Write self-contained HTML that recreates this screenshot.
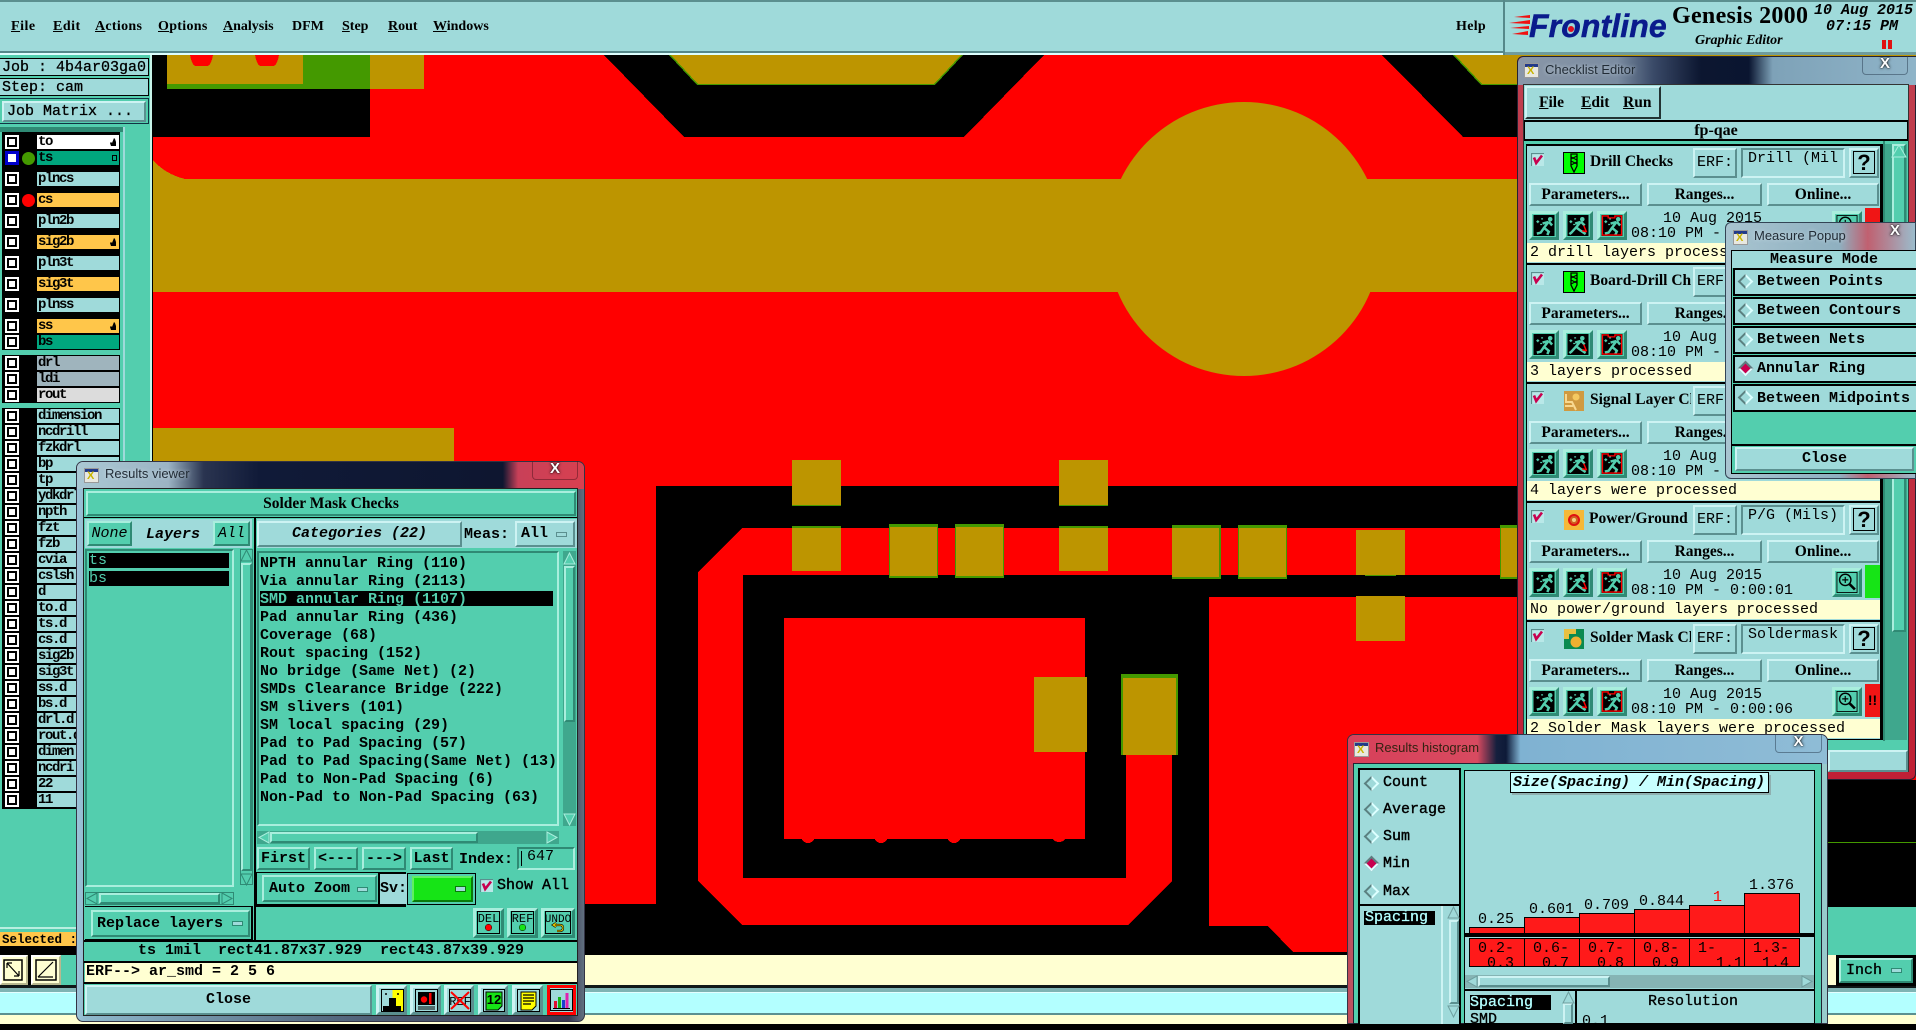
<!DOCTYPE html>
<html><head><meta charset="utf-8"><title>Genesis 2000</title>
<style>
*{box-sizing:border-box}
html,body{margin:0;padding:0;width:1916px;height:1024px;overflow:hidden;background:#000}
div,span,svg.p{position:absolute}
body{font-family:"Liberation Mono",monospace;color:#000}
.t{white-space:pre;line-height:16px;height:16px}
.m{font:15px/16px "Liberation Mono",monospace}
.mb{font:bold 15px/16px "Liberation Mono",monospace}
.mi{font:italic bold 15px/16px "Liberation Mono",monospace}
.s{font:bold 14px/16px "Liberation Serif",serif}
.s15{font:bold 15.5px/18px "Liberation Serif",serif}
.b{background:#9fdada;border:2px solid;border-color:#cdf3f3 #5b8f8f #5b8f8f #cdf3f3;display:flex;align-items:center;justify-content:center;white-space:pre}
.g{background:#53ceae;border:2px solid;border-color:#a9eedd #2f8a74 #2f8a74 #a9eedd;display:flex;align-items:center;justify-content:center;white-space:pre}
.pan{background:#9fdada}
.teal{background:#53ceae}
.r{position:absolute;left:0;width:120px;height:14px}
.r i{position:absolute;left:5px;top:0;width:14px;height:14px;background:#fff;border:2px solid #fff;box-shadow:inset 0 0 0 2px #000}
.r b{position:absolute;left:37px;top:0;width:82px;height:14px;background:#9fdada;font:bold 14px/14px "Liberation Mono",monospace;letter-spacing:-1.4px;padding-left:1px;overflow:hidden;white-space:pre}
.r u{position:absolute;left:22px;top:1px;width:13px;height:13px;border-radius:50%}
.ttl{font:13px/16px "Liberation Sans",sans-serif;color:#222c36;white-space:pre;text-shadow:0 0 4px rgba(225,238,245,.7);height:16px}
.wi{background:#e8e8e0;border:1px solid #999}
.wi:before{content:"";position:absolute;left:0;top:0;right:0;height:3px;background:#223a8a}
.wi:after{content:"X";position:absolute;left:2px;top:2px;font:bold 11px/11px "Liberation Sans",sans-serif;color:#c8b400}
.cl{font:bold 15px/15px "Liberation Sans",sans-serif;color:#fff;text-shadow:0 0 3px #000,0 0 1px #000;text-align:center}
.sec{left:1527px;width:353px;height:117px;background:#9fdada}
.sec .msg{left:0;top:97px;width:353px;height:19px;background:#ffffd2;padding-left:3px;white-space:pre;overflow:hidden;font:15px/20px "Liberation Mono",monospace}
.ib{background:#53ceae;border:3px solid;border-color:#a9eedd #2f8a74 #2f8a74 #a9eedd}
.ib svg{position:absolute;left:1px;top:1px;width:22px;height:21px}
.d{width:11px;height:11px;transform:rotate(45deg);border:2px solid;border-color:#dff #dff #5b8080 #5b8080;background:#9fdada}
.d.on{background:#c8004f;border-color:#5b8080 #dff #dff #5b8080}
.sel{background:#000;color:#53ceae}
.tr{background:#3fa78d}
.q{left:2px;top:1px;width:22px;height:23px;border:1.5px solid #000;font:bold 22px/21px "Liberation Sans",sans-serif;text-align:center}
.inp{left:214px;top:2px;width:104px;height:30px;justify-content:flex-start;align-items:flex-start;padding:1px 5px;border-color:#5b8f8f #cdf3f3 #cdf3f3 #5b8f8f;overflow:hidden}
.bb{background:#9fdada;border:3px solid;border-color:#cdf3f3 #5b8f8f #5b8f8f #cdf3f3}
.gb{background:#53ceae;border:3px solid;border-color:#a9eedd #2f8a74 #2f8a74 #a9eedd}
svg{display:block}
</style></head><body>
<svg width="0" height="0" style="position:absolute"><defs>
<symbol id="run" viewBox="0 0 22 22"><rect width="22" height="22"/><circle cx="17.5" cy="4.5" r="2.4" fill="#53ceae"/><path d="M16 7L11 13.5 16 17.5 14.5 21M11 13.5L7.5 18.5 3.5 19.5M16 7L19.5 11M15 7.5L9.5 9" stroke="#53ceae" stroke-width="2.6" fill="none"/><path d="M3 7h3M4.5 5.5v3M7 10h2M8 4h2" stroke="#53ceae" stroke-width="1.3"/></symbol>
<symbol id="run2" viewBox="0 0 22 22"><rect width="22" height="22"/><circle cx="15.5" cy="4.5" r="2.4" fill="#53ceae"/><path d="M14 7L9 13 13 16 19 20M9 13L4 18.5 2 20M14 7L18 11M13 7.5L8 9" stroke="#53ceae" stroke-width="2.6" fill="none"/><path d="M2 7h3M3.5 5.5v3M6 10h2M7 4h2" stroke="#53ceae" stroke-width="1.3"/><path d="M17 11l3 7M15.5 16.5l4 1" stroke="#f00" stroke-width="1.5"/></symbol>
<symbol id="run3" viewBox="0 0 22 22"><use href="#run"/><path d="M1 1h6v2h7V1h7v20H1z" stroke="#f00" stroke-width="1.4" fill="none"/></symbol>
<symbol id="chk" viewBox="0 0 13 13"><rect width="13" height="13" fill="#b9e8e8"/><path d="M0 .5h13M.5 0v13" stroke="#5b8f8f" stroke-width="1.2"/><path d="M3 4.5L5.2 10 11 2.5" fill="none" stroke="#c8004f" stroke-width="2.6"/></symbol>
<symbol id="zm" viewBox="0 0 24 24"><rect width="24" height="24" fill="#53ceae" stroke="#000" stroke-width="2"/><circle cx="10" cy="9" r="6.5" fill="none" stroke="#000" stroke-width="1.6"/><path d="M10 5.5v7M6.5 9h7" stroke="#000" stroke-width="1.3"/><path d="M15 14l6 6" stroke="#000" stroke-width="3"/></symbol>
<symbol id="dr" viewBox="0 0 22 22"><rect x=".5" y=".5" width="21" height="21" fill="#0f0" stroke="#000"/><path d="M8 2h6v12l-3 6-3-6z" fill="none" stroke="#000" stroke-width="1.3"/><path d="M8 5l6 3M8 9l6 3M8 13l6-3M8 7l6-3" stroke="#000" stroke-width="1"/></symbol>
<symbol id="hand" viewBox="0 0 8 9"><path d="M1 5l1-1 1 1 2-5 1 1 1 3v4H2z"/></symbol>
</defs></svg>

<!-- CANVAS -->
<svg class="p" style="left:0;top:0" width="1916" height="1024" shape-rendering="crispEdges">
<rect x="153" y="55" width="1763" height="900" fill="#f00"/>
<rect x="153" y="55" width="217" height="82" fill="#000"/>
<rect x="167" y="55" width="203" height="34" fill="#449900"/>
<rect x="167" y="55" width="136" height="29" fill="#bd9500"/>
<rect x="370" y="55" width="54" height="34" fill="#bd9500"/>
<path d="M190 55h23q-2 11-6 11h-11q-4 0-6-11zM255 55h24q-2 11-6 11h-12q-4 0-6-11z" fill="#f00"/>
<path d="M604 55L684 137H964L1044 55z" fill="#000"/>
<path d="M669 55L697 85H935L963 55z" fill="#449900"/>
<path d="M671 55L698 84H934L961 55z" fill="#bd9500"/>
<path d="M1382 55L1463 137H1916V55z" fill="#000"/>
<path d="M1453 55L1481 85H1916V55z" fill="#449900"/>
<path d="M1455 55L1482 84H1916V55z" fill="#bd9500"/>
<circle cx="1244" cy="239" r="137" fill="#bd9500" shape-rendering="auto"/>
<path d="M153 160Q165 174 185 179H1916V292H153z" fill="#bd9500"/>
<rect x="153" y="428" width="301" height="40" fill="#bd9500"/>
<path d="M656 486H1916V955H153V904H656z" fill="#000"/>
<path d="M742 528H1916V575H743V878H1126V755H1172V881L1128 925H742L698 881V572z" fill="#f00"/>
<path d="M784 618H1085V839H784z" fill="#f00"/>
<circle cx="808" cy="836" r="7" fill="#f00"/><circle cx="881" cy="836" r="7" fill="#f00"/><circle cx="954" cy="836" r="7" fill="#f00"/><circle cx="1059" cy="834" r="8" fill="#f00"/>
<path d="M1209 597H1916V952H1293L1268 926H1209z" fill="#f00"/>
<g fill="#449900">
<rect x="792" y="526" width="49" height="45"/><rect x="1059" y="526" width="49" height="45"/>
<rect x="889" y="524" width="49" height="54"/><rect x="955" y="524" width="49" height="54"/>
<rect x="1172" y="525" width="49" height="54"/><rect x="1238" y="525" width="49" height="54"/>
<rect x="1500" y="525" width="17" height="54"/><rect x="1121" y="674" width="57" height="81"/>
<rect x="1365" y="573" width="31" height="3"/><rect x="792" y="460" width="49" height="46"/><rect x="1059" y="460" width="49" height="46"/>
</g>
<g fill="#bd9500">
<rect x="792" y="460" width="49" height="45"/><rect x="1059" y="460" width="49" height="45"/>
<rect x="792" y="528" width="49" height="43"/><rect x="1059" y="528" width="49" height="43"/>
<rect x="890" y="527" width="47" height="49"/><rect x="956" y="527" width="47" height="49"/>
<rect x="1172" y="528" width="47" height="49"/><rect x="1239" y="528" width="47" height="49"/>
<rect x="1356" y="530" width="49" height="45"/><rect x="1356" y="596" width="49" height="45"/>
<rect x="1501" y="528" width="16" height="49"/>
<rect x="1034" y="677" width="53" height="75"/><rect x="1123" y="678" width="53" height="77"/>
</g>
<rect x="1828" y="780" width="88" height="127" fill="#000"/>
<rect x="1828" y="842" width="88" height="1" fill="#449900"/>
<rect x="1828" y="907" width="88" height="48" fill="#53ceae"/>
</svg>
<div style="left:152px;top:55px;width:1px;height:900px;background:#000"></div>

<!-- TOP BAR -->
<div class="pan" style="left:0;top:0;width:1916px;height:52px;border-top:2px solid #5b8f8f"></div>
<div style="left:0;top:51px;width:1503px;height:2px;background:#55888a"></div>
<div style="left:0;top:53px;width:1503px;height:2px;background:#dff"></div>
<div class="t s" style="left:11px;top:19px;letter-spacing:.5px"><u>F</u>ile</div>
<div class="t s" style="left:53px;top:19px;letter-spacing:.5px"><u>E</u>dit</div>
<div class="t s" style="left:95px;top:19px;letter-spacing:.3px"><u>A</u>ctions</div>
<div class="t s" style="left:158px;top:19px;letter-spacing:.3px"><u>O</u>ptions</div>
<div class="t s" style="left:223px;top:19px"><u>A</u>nalysis</div>
<div class="t s" style="left:292px;top:19px">DFM</div>
<div class="t s" style="left:342px;top:19px"><u>S</u>tep</div>
<div class="t s" style="left:388px;top:19px"><u>R</u>out</div>
<div class="t s" style="left:433px;top:19px"><u>W</u>indows</div>
<div class="t s" style="left:1456px;top:19px;letter-spacing:.3px">Help</div>
<!-- logo -->
<div style="left:1503px;top:0;width:2px;height:55px;background:#55888a"></div>
<div style="left:1505px;top:52px;width:411px;height:3px;background:#6f9c9c"></div>
<svg class="p" style="left:1508px;top:14px" width="24" height="24"><path d="M22 1L6 3 22 4zM22 6L1 9 22 10zM21 12L2 14 21 15zM20 17L4 20 20 21z" fill="#f01010"/></svg>
<div class="t" style="left:1529px;top:8px;height:36px;font:italic bold 32px/36px 'Liberation Sans',sans-serif;color:#0a1b8c;letter-spacing:.1px;-webkit-text-stroke:.5px #0a1b8c">Frontline</div>
<div style="left:1568px;top:26px;width:6px;height:6px;border-radius:50%;background:#e01020"></div>
<div class="t" style="left:1672px;top:2px;height:28px;font:bold 24px/28px 'Liberation Serif',serif;letter-spacing:.3px">Genesis 2000</div>
<div class="t" style="left:1695px;top:33px;font:italic bold 14px/16px 'Liberation Serif',serif">Graphic Editor</div>
<div class="t mi" style="left:1814px;top:3px">10 Aug 2015</div>
<div class="t mi" style="left:1826px;top:19px">07:15 PM</div>
<div style="left:1882px;top:40px;width:4px;height:9px;background:#e01010"></div>
<div style="left:1888px;top:40px;width:4px;height:9px;background:#e01010"></div>

<!-- LEFT PANEL -->
<div class="teal" style="left:0;top:55px;width:152px;height:877px"></div>
<div style="left:150px;top:55px;width:2px;height:900px;background:#c8f5ea"></div>
<div class="pan" style="left:0;top:58px;width:149px;height:18px;border:1px solid #000;border-left:0"></div>
<div class="t mb" style="left:2px;top:60px;font-weight:normal;-webkit-text-stroke:.3px #000">Job : 4b4ar03ga0</div>
<div class="pan" style="left:0;top:78px;width:149px;height:18px;border:1px solid #000;border-left:0"></div>
<div class="t mb" style="left:2px;top:80px;font-weight:normal;-webkit-text-stroke:.3px #000">Step: cam</div>
<div class="teal" style="left:0;top:98px;width:149px;height:26px;border:1px solid #134;border-left:0"></div>
<div class="b" style="left:2px;top:101px;width:144px;height:21px;justify-content:flex-start;padding-left:3px;font:15px/16px 'Liberation Mono',monospace;-webkit-text-stroke:.3px #000">Job Matrix ...</div>
<div style="left:0;top:127px;width:124px;height:5px;background:#2f8a74"></div>
<div style="left:123px;top:127px;width:2px;height:805px;background:#9fdada"></div>
<div style="left:2px;top:132px;width:118px;height:218px;background:#000"></div>
<div style="left:2px;top:355px;width:118px;height:48px;background:#000"></div>
<div style="left:2px;top:408px;width:118px;height:401px;background:#000"></div>

<div class="r" style="top:135px"><i></i><b style="background:#fff">to</b></div>
<div class="r" style="top:151px"><i style="border:3px solid #00c;box-shadow:none"></i><u style="background:#449900"></u><b style="background:#00a67e">ts</b></div>
<div class="r" style="top:172px"><i></i><b>plncs</b></div>
<div class="r" style="top:193px"><i></i><u style="background:#f00"></u><b style="background:#ffc64a">cs</b></div>
<div class="r" style="top:214px"><i></i><b>pln2b</b></div>
<div class="r" style="top:235px"><i></i><b style="background:#ffc64a">sig2b</b></div>
<div class="r" style="top:256px"><i></i><b>pln3t</b></div>
<div class="r" style="top:277px"><i></i><b style="background:#ffc64a">sig3t</b></div>
<div class="r" style="top:298px"><i></i><b>plnss</b></div>
<div class="r" style="top:319px"><i></i><b style="background:#ffc64a">ss</b></div>
<div class="r" style="top:335px"><i></i><b style="background:#00a67e">bs</b></div>
<div class="r" style="top:356px"><i></i><b style="background:#9fb4bd">drl</b></div>
<div class="r" style="top:372px"><i></i><b style="background:#9fb4bd">ldi</b></div>
<div class="r" style="top:388px"><i></i><b style="background:#dcdcdc">rout</b></div>
<div class="r" style="top:409px"><i></i><b>dimension</b></div>
<div class="r" style="top:425px"><i></i><b>ncdrill</b></div>
<div class="r" style="top:441px"><i></i><b>fzkdrl</b></div>
<div class="r" style="top:457px"><i></i><b>bp</b></div>
<div class="r" style="top:473px"><i></i><b>tp</b></div>
<div class="r" style="top:489px"><i></i><b>ydkdrl</b></div>
<div class="r" style="top:505px"><i></i><b>npth</b></div>
<div class="r" style="top:521px"><i></i><b>fzt</b></div>
<div class="r" style="top:537px"><i></i><b>fzb</b></div>
<div class="r" style="top:553px"><i></i><b>cvia</b></div>
<div class="r" style="top:569px"><i></i><b>cslsh</b></div>
<div class="r" style="top:585px"><i></i><b>d</b></div>
<div class="r" style="top:601px"><i></i><b>to.d</b></div>
<div class="r" style="top:617px"><i></i><b>ts.d</b></div>
<div class="r" style="top:633px"><i></i><b>cs.d</b></div>
<div class="r" style="top:649px"><i></i><b>sig2b</b></div>
<div class="r" style="top:665px"><i></i><b>sig3t</b></div>
<div class="r" style="top:681px"><i></i><b>ss.d</b></div>
<div class="r" style="top:697px"><i></i><b>bs.d</b></div>
<div class="r" style="top:713px"><i></i><b>drl.d</b></div>
<div class="r" style="top:729px"><i></i><b>rout.d</b></div>
<div class="r" style="top:745px"><i></i><b>dimen</b></div>
<div class="r" style="top:761px"><i></i><b>ncdri</b></div>
<div class="r" style="top:777px"><i></i><b>22</b></div>
<div class="r" style="top:793px"><i></i><b>11</b></div>
<svg class="p" style="left:109px;top:138px" width="8" height="9"><use href="#hand"/></svg>
<svg class="p" style="left:109px;top:238px" width="8" height="9"><use href="#hand"/></svg>
<svg class="p" style="left:109px;top:322px" width="8" height="9"><use href="#hand"/></svg>
<div style="left:112px;top:155px;width:5px;height:6px;border:1px solid #000"></div>

<!-- BOTTOM -->
<div class="teal" style="left:0;top:928px;width:152px;height:27px"></div>
<div style="left:0;top:927px;width:150px;height:2px;background:#b8efe0"></div>
<div style="left:0;top:932px;width:80px;height:14px;background:#ffc64a"></div>
<div class="t" style="left:2px;top:933px;font:bold 12.5px/15px 'Liberation Mono',monospace;height:15px">Selected :</div>
<div style="left:0;top:946px;width:152px;height:9px;background:#000"></div>
<div style="left:0;top:955px;width:1916px;height:31px;background:#ffffd2"></div>
<div style="left:0;top:954px;width:62px;height:32px;background:#000"></div>
<div style="left:0;top:955px;width:28px;height:30px;background:#ffffd2;border:2px solid;border-color:#fff #b8b890 #b8b890 #fff"></div>
<div style="left:31px;top:955px;width:30px;height:30px;background:#ffffd2;border:2px solid;border-color:#fff #b8b890 #b8b890 #fff"></div>
<svg class="p" style="left:3px;top:959px" width="20" height="22"><rect x="1" y="1" width="18" height="20" fill="none" stroke="#000" stroke-width="1.5"/><path d="M4 4l12 13M4 4h5M4 4v5M16 17h-5M16 17v-5" stroke="#000" stroke-width="1.2" fill="none"/></svg>
<svg class="p" style="left:35px;top:959px" width="22" height="22"><rect x="1" y="1" width="20" height="20" fill="none" stroke="#000" stroke-width="1.5"/><path d="M3 18L18 3M3 18h15" stroke="#000" stroke-width="1.2" fill="none"/></svg>
<div class="teal" style="left:61px;top:955px;width:15px;height:30px"></div>
<div style="left:0;top:985px;width:1916px;height:3px;background:#101818"></div>
<div style="left:0;top:988px;width:1916px;height:4px;background:#7fb4b4"></div>
<div style="left:0;top:992px;width:1916px;height:21px;background:#b3ffff;border-top:1px solid #e4ffff"></div>
<div style="left:0;top:1013px;width:1916px;height:2px;background:#5b9090"></div>
<div style="left:0;top:1015px;width:1916px;height:9px;background:#ffffd2"></div>
<div style="left:1836px;top:955px;width:80px;height:31px;background:#000"></div>
<div class="g" style="left:1839px;top:958px;width:74px;height:25px;justify-content:flex-start;padding-left:5px;font:15px/16px 'Liberation Mono',monospace;-webkit-text-stroke:.3px #000">Inch<span style="left:50px;top:8px;width:11px;height:5px;background:#9fdada;border:1px solid #2f8a74"></span></div>

<!-- CHECKLIST -->
<div style="left:1517px;top:56px;width:399px;height:724px;border-radius:6px 0 6px 6px;border:1px solid #223;background:linear-gradient(#c04050,#c02035)"></div>
<div style="left:1518px;top:57px;width:398px;height:28px;border-radius:6px 0 0 0;background:linear-gradient(90deg,#8a97a8 0,#7a8ca0 25%,#3a4a68 34%,#0c1630 46%,#0a1530 58%,#7ea2b8 64%,#8fb4c8 100%)"></div>
<div class="wi" style="left:1524px;top:63px;width:15px;height:15px"></div>
<div class="ttl" style="left:1545px;top:62px">Checklist Editor</div>
<div class="cl" style="left:1862px;top:56px;width:46px;height:19px;border:1px solid rgba(40,60,80,.5);border-top:0;border-radius:0 0 4px 4px">X</div>
<div style="left:1523px;top:84px;width:386px;height:688px;background:#53ceae;border:1px solid #333"></div>
<div class="pan" style="left:1524px;top:85px;width:384px;height:35px"></div>
<div class="b" style="left:1525px;top:86px;width:136px;height:33px;border-color:#cdf3f3 #233 #233 #cdf3f3"></div>
<div class="t s15" style="left:1539px;top:94px"><u>F</u>ile</div>
<div class="t s15" style="left:1581px;top:94px"><u>E</u>dit</div>
<div class="t s15" style="left:1623px;top:94px"><u>R</u>un</div>
<div class="pan" style="left:1524px;top:120px;width:384px;height:21px;border:1px solid #000;border-width:2px 1px;text-align:center;font:bold 16px/17px 'Liberation Serif',serif">fp-qae</div>
<div style="left:1526px;top:144px;width:357px;height:596px;background:#000"></div>
<div class="tr" style="left:1885px;top:144px;width:22px;height:596px"></div>
<div style="left:1883px;top:141px;width:2px;height:600px;background:#2f8a74"></div>
<div class="g" style="left:1892px;top:144px;width:14px;height:488px"></div>
<svg class="p" style="left:1891px;top:144px" width="16" height="14"><path d="M8 1L15 13H1z" fill="#53ceae" stroke="#a9eedd"/></svg>

<!-- section 1 -->
<div class="sec" style="top:146px">
<svg class="p" style="left:4px;top:7px" width="13" height="13"><use href="#chk"/></svg>
<svg class="p" style="left:36px;top:6px" width="22" height="22"><use href="#dr"/></svg>
<div class="t s15" style="left:63px;top:7px;width:101px;height:18px;overflow:hidden">Drill Checks</div>
<div class="b m" style="left:166px;top:2px;width:44px;height:30px">ERF:</div>
<div class="b m inp">Drill (Mil</div>
<div class="b" style="left:322px;top:2px;width:30px;height:30px"><span class="q">?</span></div>
<div class="b s15" style="left:2px;top:37px;width:113px;height:23px">Parameters...</div>
<div class="b s15" style="left:120px;top:37px;width:115px;height:23px">Ranges...</div>
<div class="b s15" style="left:240px;top:37px;width:112px;height:23px">Online...</div>
<div class="ib" style="left:2px;top:65px;width:30px;height:29px"><svg viewBox="0 0 22 22"><use href="#run"/></svg></div>
<div class="ib" style="left:36px;top:65px;width:30px;height:29px"><svg viewBox="0 0 22 22"><use href="#run2"/></svg></div>
<div class="ib" style="left:70px;top:65px;width:30px;height:29px"><svg viewBox="0 0 22 22"><use href="#run3"/></svg></div>
<div class="t m" style="left:136px;top:65px">10 Aug 2015</div>
<div class="t m" style="left:104px;top:80px">08:10 PM - 0:00:03</div>
<div class="ib" style="left:305px;top:65px;width:30px;height:29px"><svg viewBox="0 0 24 24"><use href="#zm"/></svg></div>
<div style="left:338px;top:62px;width:15px;height:33px;background:#f01515"></div>
<div class="msg">2 drill layers processed</div>
</div>
<!-- section 2 -->
<div class="sec" style="top:265px">
<svg class="p" style="left:4px;top:7px" width="13" height="13"><use href="#chk"/></svg>
<svg class="p" style="left:36px;top:6px" width="22" height="22"><use href="#dr"/></svg>
<div class="t s15" style="left:63px;top:7px;width:101px;height:18px;overflow:hidden">Board-Drill Checks</div>
<div class="b m" style="left:166px;top:2px;width:44px;height:30px">ERF:</div>
<div class="b s15" style="left:2px;top:37px;width:113px;height:23px">Parameters...</div>
<div class="b s15" style="left:120px;top:37px;width:115px;height:23px">Ranges...</div>
<div class="ib" style="left:2px;top:65px;width:30px;height:29px"><svg viewBox="0 0 22 22"><use href="#run"/></svg></div>
<div class="ib" style="left:36px;top:65px;width:30px;height:29px"><svg viewBox="0 0 22 22"><use href="#run2"/></svg></div>
<div class="ib" style="left:70px;top:65px;width:30px;height:29px"><svg viewBox="0 0 22 22"><use href="#run3"/></svg></div>
<div class="t m" style="left:136px;top:65px">10 Aug 2015</div>
<div class="t m" style="left:104px;top:80px">08:10 PM - 0:00:01</div>
<div class="msg">3 layers processed</div>
</div>
<!-- section 3 -->
<div class="sec" style="top:384px">
<svg class="p" style="left:4px;top:7px" width="13" height="13"><use href="#chk"/></svg>
<svg class="p" style="left:37px;top:7px" width="20" height="20"><rect width="20" height="20" fill="#d09a40"/><circle cx="12" cy="6" r="3.5" fill="#f5c860"/><path d="M2 3v8h6l4 8M1 15h8" stroke="#f8d890" stroke-width="2" fill="none"/></svg>
<div class="t s15" style="left:63px;top:7px;width:101px;height:18px;overflow:hidden">Signal Layer Checks</div>
<div class="b m" style="left:166px;top:2px;width:44px;height:30px">ERF:</div>
<div class="b s15" style="left:2px;top:37px;width:113px;height:23px">Parameters...</div>
<div class="b s15" style="left:120px;top:37px;width:115px;height:23px">Ranges...</div>
<div class="ib" style="left:2px;top:65px;width:30px;height:29px"><svg viewBox="0 0 22 22"><use href="#run"/></svg></div>
<div class="ib" style="left:36px;top:65px;width:30px;height:29px"><svg viewBox="0 0 22 22"><use href="#run2"/></svg></div>
<div class="ib" style="left:70px;top:65px;width:30px;height:29px"><svg viewBox="0 0 22 22"><use href="#run3"/></svg></div>
<div class="t m" style="left:136px;top:65px">10 Aug 2015</div>
<div class="t m" style="left:104px;top:80px">08:10 PM - 0:00:02</div>
<div class="msg">4 layers were processed</div>
</div>
<!-- section 4 -->
<div class="sec" style="top:503px">
<svg class="p" style="left:4px;top:7px" width="13" height="13"><use href="#chk"/></svg>
<svg class="p" style="left:37px;top:7px" width="20" height="20"><rect width="20" height="20" fill="#f5b838"/><circle cx="10" cy="10" r="5" fill="#d06020" stroke="#e01010" stroke-width="2"/><circle cx="10" cy="10" r="2" fill="#f5d080"/></svg>
<div class="t s15" style="left:62px;top:7px;width:102px;height:18px;overflow:hidden">Power/Ground Checks</div>
<div class="b m" style="left:166px;top:2px;width:44px;height:30px">ERF:</div>
<div class="b m inp">P/G (Mils)</div>
<div class="b" style="left:322px;top:2px;width:30px;height:30px"><span class="q">?</span></div>
<div class="b s15" style="left:2px;top:37px;width:113px;height:23px">Parameters...</div>
<div class="b s15" style="left:120px;top:37px;width:115px;height:23px">Ranges...</div>
<div class="b s15" style="left:240px;top:37px;width:112px;height:23px">Online...</div>
<div class="ib" style="left:2px;top:65px;width:30px;height:29px"><svg viewBox="0 0 22 22"><use href="#run"/></svg></div>
<div class="ib" style="left:36px;top:65px;width:30px;height:29px"><svg viewBox="0 0 22 22"><use href="#run2"/></svg></div>
<div class="ib" style="left:70px;top:65px;width:30px;height:29px"><svg viewBox="0 0 22 22"><use href="#run3"/></svg></div>
<div class="t m" style="left:136px;top:65px">10 Aug 2015</div>
<div class="t m" style="left:104px;top:80px">08:10 PM - 0:00:01</div>
<div class="ib" style="left:305px;top:65px;width:30px;height:29px"><svg viewBox="0 0 24 24"><use href="#zm"/></svg></div>
<div style="left:338px;top:62px;width:15px;height:33px;background:#16e416"></div>
<div class="msg">No power/ground layers processed</div>
</div>
<!-- section 5 -->
<div class="sec" style="top:622px">
<svg class="p" style="left:4px;top:7px" width="13" height="13"><use href="#chk"/></svg>
<svg class="p" style="left:37px;top:7px" width="20" height="20"><rect width="20" height="20" fill="#0a8a50"/><path d="M0 0h12v5H5v5H0z" fill="#e8c040"/><circle cx="12" cy="13" r="5.5" fill="#f0b030"/></svg>
<div class="t s15" style="left:63px;top:7px;width:101px;height:18px;overflow:hidden">Solder Mask Checks</div>
<div class="b m" style="left:166px;top:2px;width:44px;height:30px">ERF:</div>
<div class="b m inp">Soldermask</div>
<div class="b" style="left:322px;top:2px;width:30px;height:30px"><span class="q">?</span></div>
<div class="b s15" style="left:2px;top:37px;width:113px;height:23px">Parameters...</div>
<div class="b s15" style="left:120px;top:37px;width:115px;height:23px">Ranges...</div>
<div class="b s15" style="left:240px;top:37px;width:112px;height:23px">Online...</div>
<div class="ib" style="left:2px;top:65px;width:30px;height:29px"><svg viewBox="0 0 22 22"><use href="#run"/></svg></div>
<div class="ib" style="left:36px;top:65px;width:30px;height:29px"><svg viewBox="0 0 22 22"><use href="#run2"/></svg></div>
<div class="ib" style="left:70px;top:65px;width:30px;height:29px"><svg viewBox="0 0 22 22"><use href="#run3"/></svg></div>
<div class="t m" style="left:136px;top:65px">10 Aug 2015</div>
<div class="t m" style="left:104px;top:80px">08:10 PM - 0:00:06</div>
<div class="ib" style="left:305px;top:65px;width:30px;height:29px"><svg viewBox="0 0 24 24"><use href="#zm"/></svg></div>
<div style="left:338px;top:62px;width:15px;height:33px;background:#f01515;color:#000;font:bold 14px/33px 'Liberation Sans',sans-serif;text-align:center">!!</div>
<div class="msg">2 Solder Mask layers were processed</div>
</div>
<div class="b" style="left:1828px;top:750px;width:80px;height:22px"></div>

<!-- MEASURE POPUP -->
<div style="left:1725px;top:222px;width:191px;height:257px;border-radius:6px 0 0 6px;border:1px solid #345;background:linear-gradient(90deg,#a8c4d0,#8fb0c0 60%,#c06070 75%,#9bbccc)"></div>
<div class="wi" style="left:1733px;top:230px;width:15px;height:15px"></div>
<div class="ttl" style="left:1754px;top:228px">Measure Popup</div>
<div class="cl" style="left:1875px;top:224px;width:40px;height:15px;line-height:14px">X</div>
<div class="teal" style="left:1731px;top:250px;width:185px;height:224px;border:1px solid #000;border-right:0"></div>
<div class="pan mb" style="left:1732px;top:251px;width:184px;height:17px;text-align:center;line-height:18px">Measure Mode</div>
<div class="pan" style="left:1733px;top:268px;width:183px;height:28px;border:2px solid #000;border-right:0"></div>
<div class="pan" style="left:1733px;top:297px;width:183px;height:28px;border:2px solid #000;border-right:0"></div>
<div class="pan" style="left:1733px;top:326px;width:183px;height:28px;border:2px solid #000;border-right:0"></div>
<div class="pan" style="left:1733px;top:355px;width:183px;height:28px;border:2px solid #000;border-right:0"></div>
<div class="pan" style="left:1733px;top:384px;width:183px;height:28px;border:2px solid #000;border-right:0"></div>
<div class="d" style="left:1740px;top:276px"></div><div class="t mb" style="left:1757px;top:274px">Between Points</div>
<div class="d" style="left:1740px;top:305px"></div><div class="t mb" style="left:1757px;top:303px">Between Contours</div>
<div class="d" style="left:1740px;top:334px"></div><div class="t mb" style="left:1757px;top:332px">Between Nets</div>
<div class="d on" style="left:1740px;top:363px"></div><div class="t mb" style="left:1757px;top:361px">Annular Ring</div>
<div class="d" style="left:1740px;top:392px"></div><div class="t mb" style="left:1757px;top:391px">Between Midpoints</div>
<div style="left:1731px;top:444px;width:185px;height:2px;background:#000"></div>
<div class="b mb" style="left:1735px;top:447px;width:179px;height:24px">Close</div>

<!-- RESULTS VIEWER -->
<div style="left:76px;top:461px;width:509px;height:561px;border-radius:7px;border:1px solid #334;background:linear-gradient(90deg,#9cc4d8 0,#8fb8cc 2%,#556a80 50%,#3a3850 97%,#607080)"></div>
<div style="left:77px;top:462px;width:507px;height:27px;border-radius:6px 6px 0 0;background:linear-gradient(90deg,#aac8d4 0,#9cb4c4 18%,#2a3450 25%,#101a38 36%,#0e1630 84%,#c84058 87%,#d84050 100%)"></div>
<div class="wi" style="left:84px;top:468px;width:15px;height:15px"></div>
<div class="ttl" style="left:105px;top:466px">Results viewer</div>
<div class="cl" style="left:532px;top:461px;width:46px;height:19px;border:1px solid rgba(80,20,30,.5);border-top:0;border-radius:0 0 4px 4px">X</div>
<div class="teal" style="left:83px;top:488px;width:495px;height:528px;border:1px solid #222"></div>
<div class="g" style="left:86px;top:491px;width:490px;height:25px;font:bold 15.5px/18px 'Liberation Serif',serif">Solder Mask Checks</div>
<div style="left:84px;top:517px;width:493px;height:1px;background:#000"></div>
<!-- left -->
<div class="pan" style="left:85px;top:519px;width:167px;height:29px"></div>
<div class="g" style="left:87px;top:521px;width:45px;height:25px;font:italic 15px/16px 'Liberation Mono',monospace">None</div>
<div class="t mi" style="left:146px;top:527px">Layers</div>
<div class="g" style="left:213px;top:521px;width:37px;height:25px;font:italic 15px/16px 'Liberation Mono',monospace">All</div>
<div style="left:85px;top:549px;width:149px;height:338px;border:2px solid;border-color:#2f8a74 #a9eedd #a9eedd #2f8a74"></div>
<div class="sel m" style="left:89px;top:553px;width:140px;height:15px;line-height:15px">ts</div>
<div class="sel m" style="left:89px;top:571px;width:140px;height:15px;line-height:15px">bs</div>
<div style="left:240px;top:549px;width:13px;height:336px;border:1px solid #2f8a74"></div>
<div class="g" style="left:241px;top:563px;width:11px;height:308px"></div>
<svg class="p" style="left:240px;top:549px" width="13" height="13"><path d="M6.5 1L12 12H1z" fill="#53ceae" stroke="#2f8a74"/></svg>
<svg class="p" style="left:240px;top:873px" width="13" height="13"><path d="M6.5 12L12 1H1z" fill="#53ceae" stroke="#2f8a74"/></svg>
<div style="left:85px;top:892px;width:149px;height:13px;border:1px solid #2f8a74"></div>
<div class="g" style="left:99px;top:893px;width:121px;height:11px"></div>
<svg class="p" style="left:86px;top:892px" width="12" height="13"><path d="M1 6.5L11 1V12z" fill="#53ceae" stroke="#2f8a74"/></svg>
<svg class="p" style="left:221px;top:892px" width="12" height="13"><path d="M11 6.5L1 1V12z" fill="#53ceae" stroke="#2f8a74"/></svg>
<div style="left:85px;top:906px;width:168px;height:34px;background:#000"></div>
<div class="teal" style="left:85px;top:907px;width:166px;height:32px"></div>
<div class="g mb" style="left:91px;top:910px;width:159px;height:27px;justify-content:flex-start;padding-left:4px">Replace layers<span style="left:139px;top:9px;width:11px;height:5px;background:#9fdada;border:1px solid #2f8a74"></span></div>
<!-- right -->
<div style="left:254px;top:518px;width:2px;height:424px;background:#000"></div>
<div class="pan" style="left:257px;top:519px;width:320px;height:29px"></div>
<div class="b mi" style="left:257px;top:521px;width:205px;height:26px">Categories (22)</div>
<div class="t mb" style="left:464px;top:527px">Meas:</div>
<div class="b mb" style="left:515px;top:521px;width:60px;height:26px;justify-content:flex-start;padding-left:4px">All<span style="left:39px;top:9px;width:11px;height:5px;background:#9fdada;border:1px solid #5b8f8f"></span></div>
<div style="left:257px;top:551px;width:302px;height:275px;border:2px solid;border-color:#2f8a74 #a9eedd #a9eedd #2f8a74"></div>
<div class="t mb" style="left:260px;top:556px">NPTH annular Ring (110)</div>
<div class="t mb" style="left:260px;top:574px">Via annular Ring (2113)</div>
<div class="sel" style="left:260px;top:591px;width:293px;height:15px"></div>
<div class="t mb" style="left:260px;top:592px;color:#53ceae">SMD annular Ring (1107)</div>
<div class="t mb" style="left:260px;top:610px">Pad annular Ring (436)</div>
<div class="t mb" style="left:260px;top:628px">Coverage (68)</div>
<div class="t mb" style="left:260px;top:646px">Rout spacing (152)</div>
<div class="t mb" style="left:260px;top:664px">No bridge (Same Net) (2)</div>
<div class="t mb" style="left:260px;top:682px">SMDs Clearance Bridge (222)</div>
<div class="t mb" style="left:260px;top:700px">SM slivers (101)</div>
<div class="t mb" style="left:260px;top:718px">SM local spacing (29)</div>
<div class="t mb" style="left:260px;top:736px">Pad to Pad Spacing (57)</div>
<div class="t mb" style="left:260px;top:754px">Pad to Pad Spacing(Same Net) (13)</div>
<div class="t mb" style="left:260px;top:772px">Pad to Non-Pad Spacing (6)</div>
<div class="t mb" style="left:260px;top:790px">Non-Pad to Non-Pad Spacing (63)</div>
<div class="tr" style="left:563px;top:551px;width:13px;height:275px"></div>
<div class="g" style="left:564px;top:566px;width:11px;height:156px"></div>
<svg class="p" style="left:563px;top:552px" width="13" height="13"><path d="M6.5 1L12 12H1z" fill="#53ceae" stroke="#a9eedd"/></svg>
<svg class="p" style="left:563px;top:813px" width="13" height="13"><path d="M6.5 12L12 1H1z" fill="#53ceae" stroke="#a9eedd"/></svg>
<div class="tr" style="left:257px;top:831px;width:302px;height:13px"></div>
<div class="g" style="left:270px;top:832px;width:208px;height:11px"></div>
<svg class="p" style="left:258px;top:831px" width="12" height="13"><path d="M1 6.5L11 1V12z" fill="#53ceae" stroke="#a9eedd"/></svg>
<svg class="p" style="left:546px;top:831px" width="12" height="13"><path d="M11 6.5L1 1V12z" fill="#53ceae" stroke="#a9eedd"/></svg>
<div class="g mb" style="left:257px;top:847px;width:53px;height:23px;padding-top:1px">First</div>
<div class="g mb" style="left:314px;top:847px;width:44px;height:23px;padding-top:1px">&lt;---</div>
<div class="g mb" style="left:362px;top:847px;width:44px;height:23px;padding-top:1px">---&gt;</div>
<div class="g mb" style="left:410px;top:847px;width:43px;height:23px;padding-top:1px">Last</div>
<div class="t mb" style="left:459px;top:852px">Index:</div>
<div style="left:517px;top:847px;width:58px;height:23px;border:2px solid;border-color:#2f8a74 #a9eedd #a9eedd #2f8a74;font:15px/15px 'Liberation Mono',monospace;padding-left:8px">647</div>
<div style="left:521px;top:851px;width:1px;height:15px;background:#000"></div>
<div style="left:256px;top:872px;width:150px;height:35px;background:#000"></div>
<div class="teal" style="left:257px;top:873px;width:121px;height:31px"></div>
<div class="g mb" style="left:262px;top:875px;width:115px;height:27px;justify-content:flex-start;padding-left:5px">Auto Zoom<span style="left:93px;top:10px;width:11px;height:5px;background:#9fdada;border:1px solid #2f8a74"></span></div>
<div class="pan mb" style="left:380px;top:874px;width:27px;height:30px;line-height:30px">Sv:</div>
<div class="teal" style="left:407px;top:873px;width:69px;height:32px;border:1px solid #000"></div>
<div style="left:412px;top:876px;width:61px;height:26px;background:#16e416;border:2px solid;border-color:#60f060 #0a7a0a #0a7a0a #60f060"></div>
<div style="left:455px;top:886px;width:11px;height:6px;background:#9fdada;border:1px solid #0a7a0a"></div>
<svg class="p" style="left:480px;top:879px" width="13" height="13"><use href="#chk"/></svg>
<div class="t mb" style="left:497px;top:878px;font-weight:normal;-webkit-text-stroke:.4px #000">Show All</div>
<!-- DEL/REF/UNDO -->
<div class="gb" style="left:473px;top:908px;width:31px;height:30px"><svg class="p" style="left:1px;top:0" width="23" height="24"><rect x=".5" y=".5" width="22" height="22" fill="#53ceae" stroke="#000"/><text x="11.5" y="11" text-anchor="middle" font-family="Liberation Mono" font-size="12">DEL</text><circle cx="11.5" cy="16.5" r="3.3" fill="#f00" stroke="#000" stroke-width=".5"/></svg></div>
<div class="gb" style="left:507px;top:908px;width:31px;height:30px"><svg class="p" style="left:1px;top:0" width="23" height="24"><rect x=".5" y=".5" width="22" height="22" fill="#53ceae" stroke="#000"/><text x="11.5" y="11" text-anchor="middle" font-family="Liberation Mono" font-size="12">REF</text><circle cx="11.5" cy="16.5" r="3.3" fill="#16e416" stroke="#000" stroke-width=".5"/></svg></div>
<div class="gb" style="left:541px;top:908px;width:34px;height:30px"><svg class="p" style="left:1px;top:0" width="26" height="24"><rect x=".5" y=".5" width="25" height="22" fill="#53ceae" stroke="#000"/><text x="13" y="11" text-anchor="middle" font-family="Liberation Mono" font-size="11">UNDO</text><path d="M9 14h6q3 0 3 3t-3 3h-3M11 12l-3 2 3 2" fill="none" stroke="#000" stroke-width="2.2"/><path d="M9 14h6q3 0 3 3t-3 3h-3M11 12l-3 2 3 2" fill="none" stroke="#f0d000" stroke-width="1"/></svg></div>
<div style="left:84px;top:940px;width:493px;height:2px;background:#000"></div>
<div class="teal" style="left:84px;top:942px;width:493px;height:19px"></div>
<div class="t mb" style="left:138px;top:943px">ts 1mil</div>
<div class="t mb" style="left:218px;top:943px">rect41.87x37.929</div>
<div class="t mb" style="left:380px;top:943px">rect43.87x39.929</div>
<div style="left:84px;top:961px;width:493px;height:2px;background:#000"></div>
<div style="left:85px;top:963px;width:492px;height:19px;background:#ffffd2"></div>
<div class="t" style="left:86px;top:964px;font:bold 15px/16px 'Liberation Mono',monospace">ERF--&gt; ar_smd = 2 5 6</div>
<div style="left:84px;top:982px;width:493px;height:2px;background:#000"></div>
<div class="b mb" style="left:85px;top:985px;width:287px;height:30px">Close</div>
<!-- bottom icon buttons -->
<div class="bb" style="left:376px;top:985px;width:31px;height:30px"><svg class="p" style="left:2px;top:1px" width="23" height="23"><rect x="0" y="0" width="11.5" height="23" fill="#9fdada"/><rect x="11.5" y="0" width="11.5" height="23" fill="#ff0"/><rect x=".5" y=".5" width="22" height="22" fill="none" stroke="#000"/><circle cx="5" cy="5" r="1" fill="#000"/><circle cx="17" cy="5" r="1" fill="#000"/><path d="M8 9h7v8h5v6H2v-6h6z" fill="#000"/></svg></div>
<div class="bb" style="left:410px;top:985px;width:31px;height:30px"><svg class="p" style="left:2px;top:1px" width="23" height="23"><rect x=".5" y=".5" width="22" height="22" fill="#9fdada" stroke="#000"/><rect x="3" y="3" width="17" height="13" fill="#000"/><circle cx="9" cy="10.5" r="3.2" fill="#f00"/><rect x="14" y="4" width="2.5" height="11" fill="#f00"/><path d="M3 18h17M3 20h17" stroke="#000"/></svg></div>
<div class="bb" style="left:444px;top:985px;width:30px;height:30px"><svg class="p" style="left:2px;top:1px" width="22" height="23"><rect x=".5" y=".5" width="21" height="22" fill="#9fdada" stroke="#000"/><text x="11" y="16" text-anchor="middle" font-family="Liberation Mono" font-size="12">REF</text><path d="M2 3L20 20M20 3L2 20" stroke="#f00" stroke-width="2"/></svg></div>
<div class="bb" style="left:478px;top:985px;width:30px;height:30px"><svg class="p" style="left:2px;top:1px" width="22" height="23"><rect x=".5" y=".5" width="21" height="22" fill="#9fdada" stroke="#000"/><path d="M3 3h16v14l-4 4H3z" fill="#16e416" stroke="#000"/><text x="11" y="15" text-anchor="middle" font-family="Liberation Sans" font-size="13" font-weight="bold">12</text></svg></div>
<div class="bb" style="left:512px;top:985px;width:31px;height:30px"><svg class="p" style="left:2px;top:1px" width="23" height="23"><rect x=".5" y=".5" width="22" height="22" fill="#9fdada" stroke="#000"/><path d="M4 3h15v14l-4 4H4z" fill="#ff0" stroke="#000"/><path d="M6 6h11M6 9h11M6 12h11M6 15h8" stroke="#000" stroke-width="1.2"/></svg></div>
<div style="left:547px;top:985px;width:29px;height:30px;border:3px solid #f00;background:#9fdada"><svg class="p" style="left:0;top:0" width="23" height="24"><rect x=".5" y="1.5" width="22" height="21" fill="#9fdada" stroke="#000"/><rect x="4" y="13" width="3" height="7" fill="#e01030"/><rect x="8" y="9" width="3" height="11" fill="#16b416"/><rect x="12" y="12" width="3" height="8" fill="#1a40d0"/><rect x="15.5" y="5" width="3" height="15" fill="#e020b0"/><path d="M3 20.5h17" stroke="#000"/></svg></div>

<!-- RESULTS HISTOGRAM -->
<div style="left:1347px;top:734px;width:481px;height:290px;border-radius:7px 7px 0 0;border:1px solid #334;background:linear-gradient(90deg,#c04a58,#8ab4cc 10%,#8ab4cc 90%,#9cc)"></div>
<div style="left:1348px;top:735px;width:479px;height:29px;border-radius:6px 6px 0 0;background:linear-gradient(90deg,#d8405a 0,#d84a60 27%,#15203e 31%,#0e1a38 33%,#7fb2d2 36%,#8fbcd6 100%)"></div>
<div class="wi" style="left:1354px;top:742px;width:15px;height:15px"></div>
<div class="ttl" style="left:1375px;top:740px;text-shadow:none;color:#321">Results histogram</div>
<div class="cl" style="left:1775px;top:734px;width:47px;height:19px;border:1px solid rgba(40,60,80,.5);border-top:0;border-radius:0 0 4px 4px">X</div>
<div class="teal" style="left:1353px;top:763px;width:469px;height:261px;border:1px solid #223"></div>
<div class="pan" style="left:1358px;top:768px;width:103px;height:138px;border:2px solid #000"></div>
<div class="d" style="left:1366px;top:778px"></div><div class="t mb" style="left:1383px;top:775px;font-weight:normal;-webkit-text-stroke:.4px #000">Count</div>
<div class="d" style="left:1366px;top:804px"></div><div class="t mb" style="left:1383px;top:802px;font-weight:normal;-webkit-text-stroke:.4px #000">Average</div>
<div class="d" style="left:1366px;top:831px"></div><div class="t mb" style="left:1383px;top:829px;font-weight:normal;-webkit-text-stroke:.4px #000">Sum</div>
<div class="d on" style="left:1366px;top:858px"></div><div class="t mb" style="left:1383px;top:856px;font-weight:normal;-webkit-text-stroke:.4px #000">Min</div>
<div class="d" style="left:1366px;top:886px"></div><div class="t mb" style="left:1383px;top:884px;font-weight:normal;-webkit-text-stroke:.4px #000">Max</div>
<div class="pan" style="left:1358px;top:906px;width:103px;height:118px;border:2px solid #000;border-top:0;border-bottom:0"></div>
<div style="left:1441px;top:906px;width:2px;height:118px;background:#cdf3f3"></div>
<div style="left:1364px;top:911px;width:71px;height:14px;background:#000;color:#b3ffff;font:15px/14px 'Liberation Mono',monospace;padding-left:1px;white-space:pre;-webkit-text-stroke:.3px #b3ffff">Spacing</div>
<div class="b" style="left:1449px;top:920px;width:10px;height:84px"></div>
<svg class="p" style="left:1447px;top:906px" width="13" height="13"><path d="M6.5 1L12 12H1z" fill="#9fdada" stroke="#6f9f9f"/></svg>
<svg class="p" style="left:1447px;top:1005px" width="13" height="13"><path d="M6.5 12L12 1H1z" fill="#9fdada" stroke="#6f9f9f"/></svg>
<div class="pan" style="left:1464px;top:770px;width:351px;height:254px;border:1px solid #000"></div>
<div style="left:1512px;top:775px;width:259px;height:20px;background:#8fb0b0"></div>
<div style="left:1510px;top:772px;width:259px;height:21px;background:#c8ffff;border:1px solid #000"></div>
<div class="t" style="left:1513px;top:775px;font:italic bold 15px/16px 'Liberation Mono',monospace">Size(Spacing) / Min(Spacing)</div>
<div class="t m" style="left:1478px;top:912px">0.25</div>
<div class="t m" style="left:1529px;top:902px">0.601</div>
<div class="t m" style="left:1584px;top:898px">0.709</div>
<div class="t m" style="left:1639px;top:894px">0.844</div>
<div class="t m" style="left:1713px;top:890px;color:#f00">1</div>
<div class="t m" style="left:1749px;top:878px">1.376</div>
<div style="left:1469px;top:927px;width:56px;height:7px;background:#ff1a1a;border:1px solid #000"></div>
<div style="left:1524px;top:917px;width:56px;height:17px;background:#ff1a1a;border:1px solid #000"></div>
<div style="left:1579px;top:913px;width:56px;height:21px;background:#ff1a1a;border:1px solid #000"></div>
<div style="left:1634px;top:909px;width:56px;height:25px;background:#ff1a1a;border:1px solid #000"></div>
<div style="left:1689px;top:905px;width:56px;height:29px;background:#ff1a1a;border:1px solid #000"></div>
<div style="left:1744px;top:893px;width:56px;height:41px;background:#ff1a1a;border:1px solid #000"></div>
<div style="left:1464px;top:933px;width:351px;height:4px;background:#000"></div>
<div class="m" style="left:1469px;top:938px;width:56px;height:29px;background:#ff1a1a;border:1px solid #000;overflow:hidden;white-space:pre;padding:2px 0 0 8px;line-height:15px">0.2-
 0.3</div>
<div class="m" style="left:1524px;top:938px;width:56px;height:29px;background:#ff1a1a;border:1px solid #000;overflow:hidden;white-space:pre;padding:2px 0 0 8px;line-height:15px">0.6-
 0.7</div>
<div class="m" style="left:1579px;top:938px;width:56px;height:29px;background:#ff1a1a;border:1px solid #000;overflow:hidden;white-space:pre;padding:2px 0 0 8px;line-height:15px">0.7-
 0.8</div>
<div class="m" style="left:1634px;top:938px;width:56px;height:29px;background:#ff1a1a;border:1px solid #000;overflow:hidden;white-space:pre;padding:2px 0 0 8px;line-height:15px">0.8-
 0.9</div>
<div class="m" style="left:1689px;top:938px;width:56px;height:29px;background:#ff1a1a;border:1px solid #000;overflow:hidden;white-space:pre;padding:2px 0 0 8px;line-height:15px">1-
  1.1</div>
<div class="m" style="left:1744px;top:938px;width:56px;height:29px;background:#ff1a1a;border:1px solid #000;overflow:hidden;white-space:pre;padding:2px 0 0 8px;line-height:15px">1.3-
 1.4</div>
<div style="left:1465px;top:975px;width:349px;height:13px;background:#86b4b4"></div>
<div class="b" style="left:1478px;top:976px;width:132px;height:11px"></div>
<svg class="p" style="left:1466px;top:975px" width="12" height="13"><path d="M1 6.5L11 1V12z" fill="#9fdada" stroke="#6f9f9f"/></svg>
<svg class="p" style="left:1801px;top:975px" width="12" height="13"><path d="M11 6.5L1 1V12z" fill="#9fdada" stroke="#6f9f9f"/></svg>
<div style="left:1464px;top:989px;width:351px;height:2px;background:#000"></div>
<div style="left:1470px;top:995px;width:81px;height:15px;background:#000;color:#b3ffff;font:15px/15px 'Liberation Mono',monospace;white-space:pre;-webkit-text-stroke:.3px #b3ffff">Spacing</div>
<div class="t m" style="left:1470px;top:1012px;-webkit-text-stroke:.3px #000">SMD</div>
<div class="b" style="left:1563px;top:1003px;width:10px;height:21px"></div>
<svg class="p" style="left:1562px;top:991px" width="13" height="13"><path d="M6.5 1L12 12H1z" fill="#9fdada" stroke="#6f9f9f"/></svg>
<div style="left:1575px;top:990px;width:2px;height:34px;background:#000"></div>
<div class="t m" style="left:1648px;top:994px;-webkit-text-stroke:.3px #000">Resolution</div>
<div class="t m" style="left:1582px;top:1014px">0.1</div>
</body></html>
